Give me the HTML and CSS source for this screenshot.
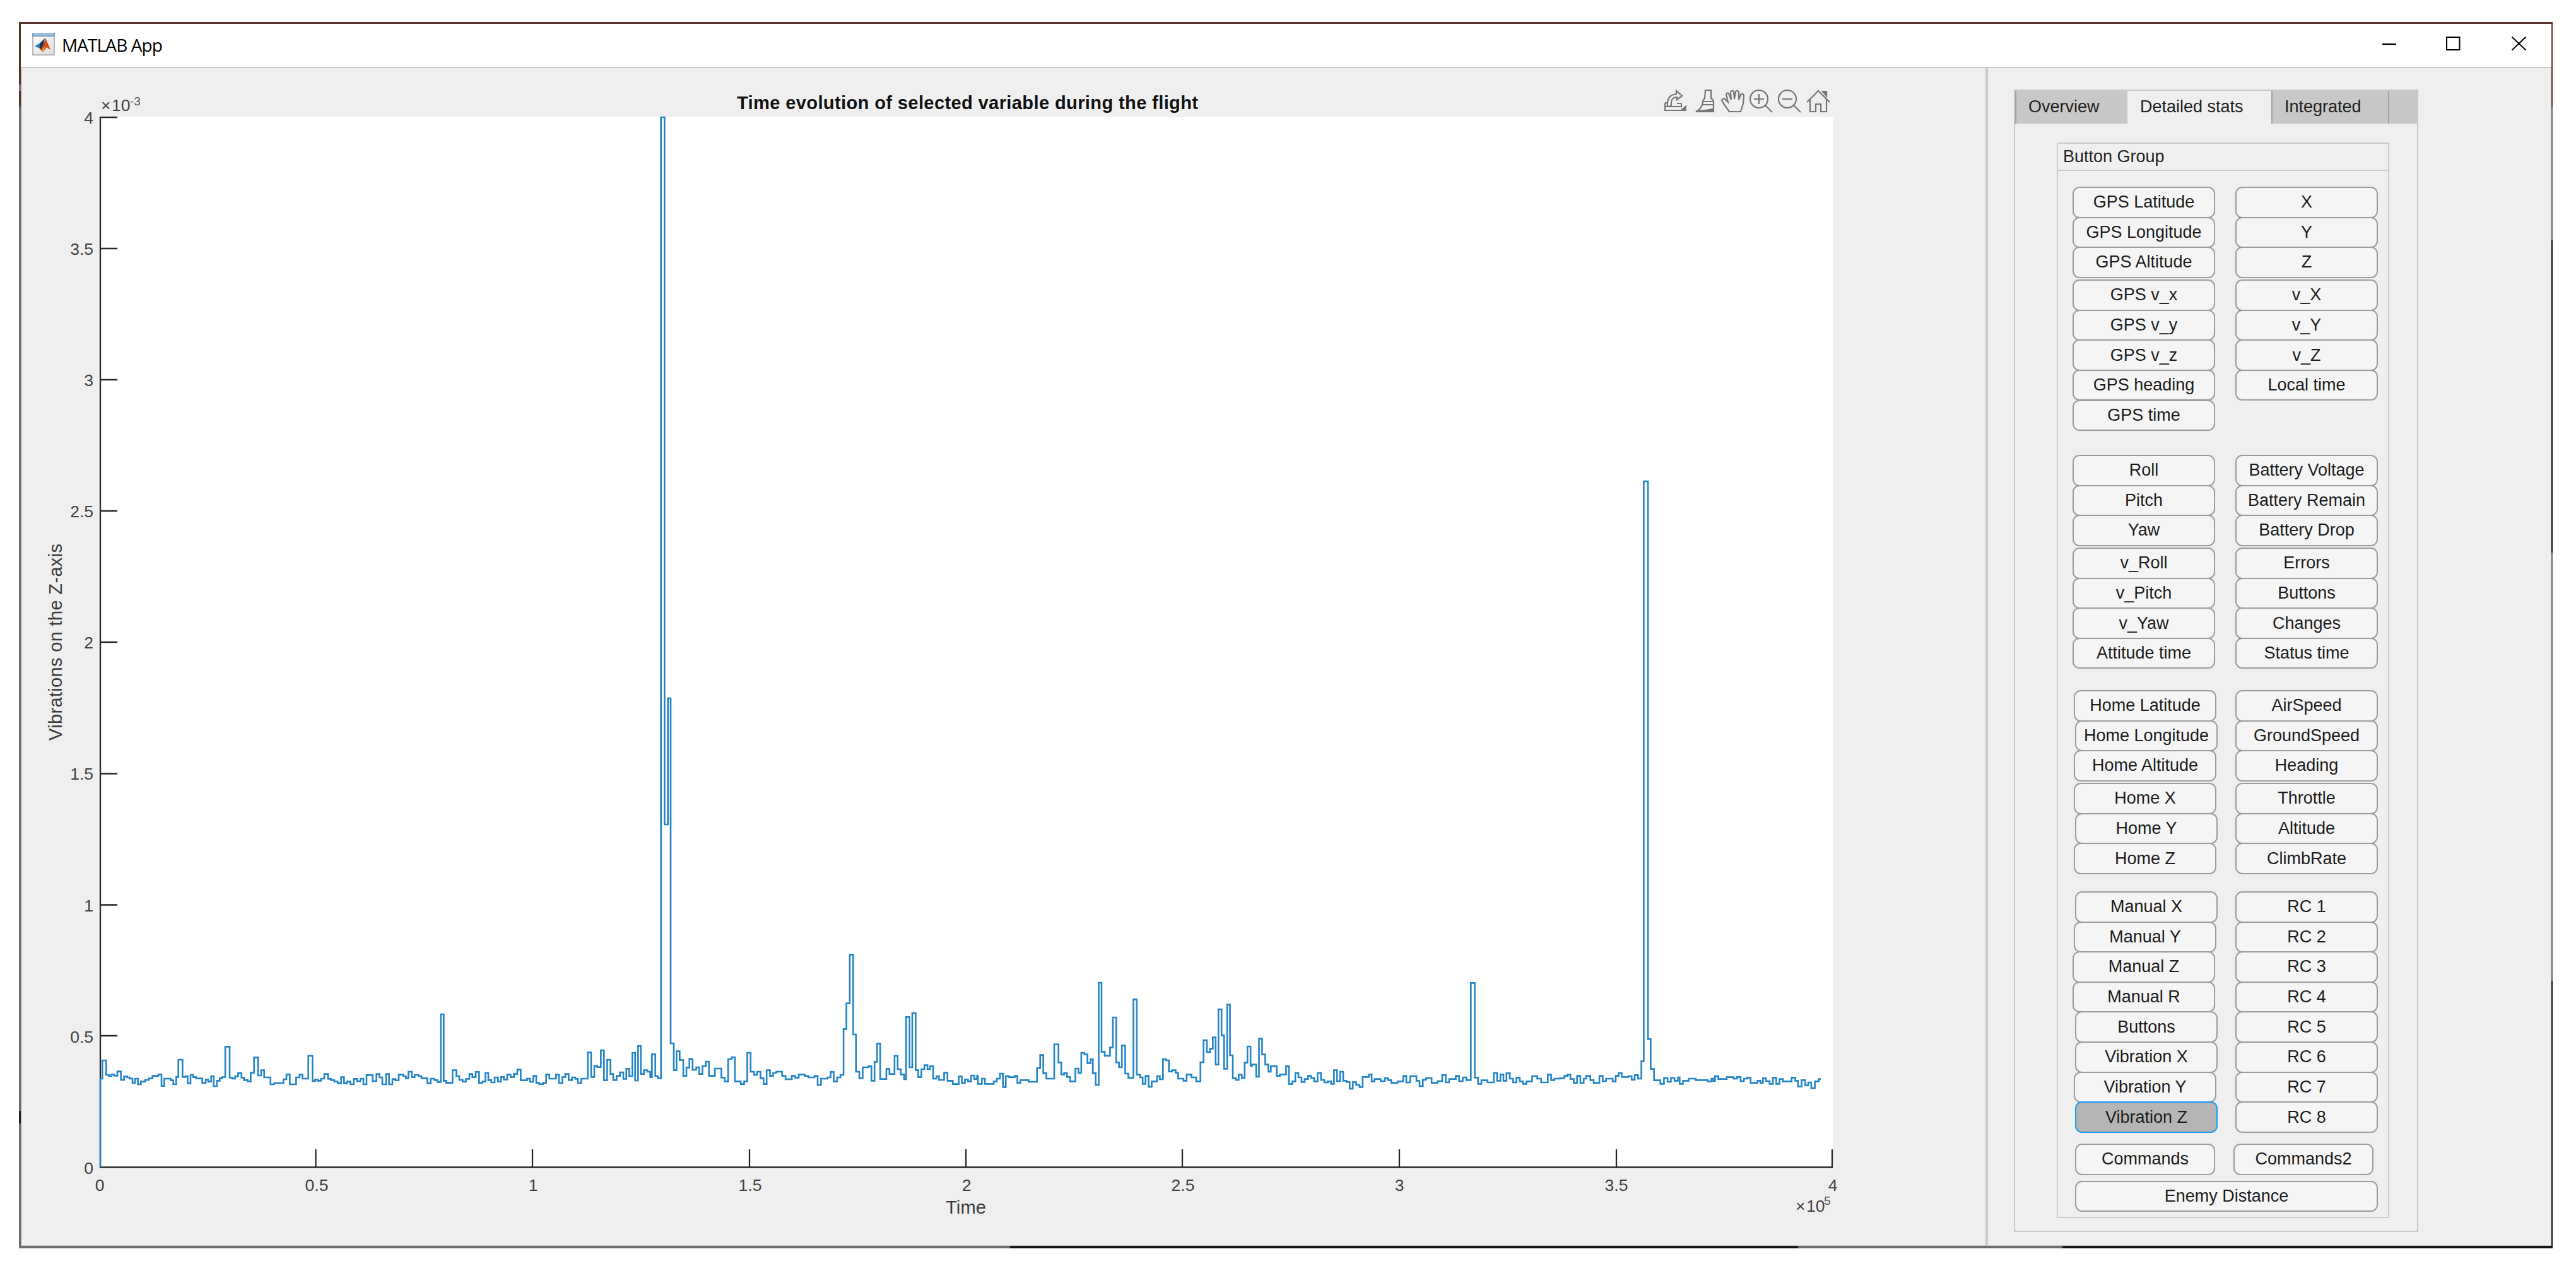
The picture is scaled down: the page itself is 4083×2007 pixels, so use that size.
FILE: index.html
```html
<!DOCTYPE html>
<html lang="en">
<head>
<meta charset="utf-8">
<title>MATLAB App</title>
<link rel="stylesheet" href="styles.css">
</head>
<body>
<div class="window">
  <header class="titlebar">
    <svg class="app-icon" viewBox="0 0 36 36">
      <defs><linearGradient id="sheet" x1="0" y1="0" x2="1" y2="1"><stop offset="0" stop-color="#fff"/><stop offset="1" stop-color="#dcdcdc"/></linearGradient>
      <linearGradient id="flame" x1="0" y1="0" x2="1" y2="0"><stop offset="0" stop-color="#7a1c12"/><stop offset=".5" stop-color="#e0561a"/><stop offset="1" stop-color="#c8321c"/></linearGradient></defs>
      <rect x="1" y="1" width="34" height="34" fill="url(#sheet)" stroke="#b4b8bb" stroke-width="2"/>
      <rect x="0" y="0" width="36" height="6" fill="#7d9fbd"/><rect x="2" y="1" width="32" height="3" fill="#a3c8e6"/>
      <path d="M4 21L12 16.500L19 10L15 26L10 24Z" fill="#3b78b5"/>
      <path d="M12 17L20 9L17 25L12 25Z" fill="#173a66"/>
      <path d="M21 8L29 27L23 23L17 31L12 25Q18 22 21 8Z" fill="url(#flame)"/>
      <path d="M15 27L20 21L19 28L17 31Z" fill="#f4a52a"/>
    </svg>
    <span class="app-name">MATLAB App</span>
    <svg class="controls" viewBox="0 0 228 22" fill="none" stroke="#000" stroke-width="2">
      <path d="M0 12H22" stroke-width="2.300"/><rect x="102" y="1" width="20.500" height="20"/><path d="M205.500 .5L227.500 21.500M227.500 .5L205.500 21.500"/>
    </svg>
  </header>
  <main class="content">
    <section class="plot-panel">
      <svg class="plot" viewBox="35 108 3112 1867">
        <rect x="159" y="185" width="2746" height="1665" fill="#fff"/>
        <g class="axis">
          <path d="M159 185V1850.500H2905"/>
          <path d="M159 186H186M159 394H186M159 602H186M159 810H186M159 1018H186M159 1226.500H186M159 1434.500H186M159 1642H186"/>
          <path d="M500.500 1850V1822M844 1850V1822M1188 1850V1822M1531 1850V1822M1874 1850V1822M2218 1850V1822M2562 1850V1822M2904 1850V1822"/>
        </g>
        <g class="series">
          <path transform="translate(150 1600) scale(.33333)" d="M27 750V330H37V243H55V312H68V318H80V311H94V316H108V296H125V336H140V320H155V324H166V330H180V351H192V330H206V357H220V344H240V336H258V329H275V317H303V310H318V365H331V330H362V338H374V357H388V322H398V240H418V322H432V318H442V352H456V312H468V323H482V329H512V350H528V335H540V344H554V318H566V366H581V340H595V329H605V323H621V178H642V325H655V330H668V319H682V304H698V325H710V337H728V343H742V302H758V229H777V315H792V290H806V324H836V357H854V351H898V333H912V310H928V357H958V324H974V311H988V330H1016V221H1036V342H1048V335H1062V340H1076V330H1092V308H1110V331H1124V337H1140V344H1156V352H1172V323H1186V352H1200V344H1216V357H1232V331H1248V342H1264V330H1278V357H1293V313H1322V342H1340V308H1354V324H1368V357H1386V308H1400V357H1416V332H1430V338H1446V311H1468V318H1480V328H1492V297H1508V323H1522V312H1530"/>
          <path transform="translate(600 1600) scale(.33333)" d="M180 312H190V318H204V328H232V352H248V330H266V337H280V346H296V24H310V340H322V350H352V290H370V318H384V336H400V344H416V331H432V308H446V323H462V298H478V350H494V344H508V303H522V337H536V348H552V324H568V344H582V322H596V334H612V311H628V323H644V308H660V287H676V338H706V330H720V345H736V317H750V350H764V356H782V350H797V310H812V330H844V311H858V351H874V323H888V308H904V337H920V324H936V331H948V351H964V330H995V205H1011V322H1026V269H1040V275H1057V195H1072V338H1087V240H1103V308H1116V337H1132V317H1148V300H1164V331H1178V283H1192V318H1207V207H1220V339H1234V175H1247V308H1262V290H1278V297H1292V323H1300V214H1316V318H1328V328H1343V-4242H1360V-879H1376V-1479H1389V162H1404V290H1417V200H1432V242H1449V317H1464V277H1478V236H1494"/>
          <path transform="translate(850 1500) scale(.44643 .33333)" d="M555 536V588H568V576H578V608H590V570H602V549H613V617H634V582H657V625H669V643H681V537H694V528H705V643H726V656H738V643H749V507H761V597H773V612H784V597H796V628H807V656H818V590H830V617H841V603H852V597H873V617H885V633H907V617H919V625H932V610H953V617H966V624H988V617H999V660H1011V630H1034V624H1045V598H1056V643H1068V624H1080V612H1091V394H1101V272H1113V40H1125V420H1135V597H1147V628H1159V576H1180V571H1190V640H1201V550H1210V463H1221V632H1243V584H1254V608H1272V521H1283V585H1294V610H1306V633H1313V337H1325V576H1335V318H1347V590H1356V623H1367V585H1378V566H1389V585H1398V570H1409V630H1421V618H1430V636H1448V602H1460V640H1479V656H1500V620H1511V650H1522V634H1533V643H1544V615H1555V632H1565V615H1568"/>
          <path transform="translate(1550 1500) scale(.44643 .33333)" d="M0 615V655H14V630H25V655H56V643H67V630H78V606H89V670H99V618H110V623H131V617H140V650H151V637H180V645H210V580H221V518H232V604H243V630H271V467H286V553H296V610H306V603H316V622H327V643H346V582H357V603H367V507H378V514H389V556H400V537H408V604H418V660H429V174H439V502H450V521H469V482H479V339H491V553H501V576H511V472H523V606H534V626H552V253H564V611H576V624H585V655H595V617H606V669H617V643H636V618H646V633H657V537H668V543H678V596H690V590H702V602H711V630H730V640H741V610H758V624H775V643H790V552H801V447H813V504H824V487H834V434H844V563H854V300H865V424H874V583H885V278H895V519H905V628H916V636H926V611H937V627H947V554H957V477H968V569H973V563H988V621H998V440H1009V515H1020V563H1031V597H1040V571H1061V617H1072V610H1094V571H1104V656H1116V643H1127V603H1138V624H1149V646H1160V632H1172V617H1183V627H1194V643H1206V603H1218V636H1230V648H1242V643H1254V655H1264V590H1275V642H1286V597H1297V640H1309V646H1320V678H1331V647H1343V660H1355V670H1366V622H1388V610H1398V643H1408V632H1430V642H1445V628H1456V637H1468V650H1490V643H1510V617H1521V648H1535V618H1557V640H1568"/>
          <path transform="translate(2250 1500) scale(.47831 .33333)" d="M0 640V666H11V635H22V627H40V650H60V642H75V613H87V648H98V632H120V617H131V642H143V624H155V637H170V175H183V625H194V655H205V638H225V648H246V603H257V640H268V610H278V640H288V604H299V630H310V648H321V625H332V643H343V655H354V643H373V618H390V630H403V648H425V611H436V637H447V630H465V628H480V617H490V611H500V632H511V650H522V617H533V650H544V630H552V617H566V637H577V650H596V617H607V642H618V630H640V643H650V617H660V603H670V622H692V618H703V635H713V613H724V630H735V547H743V-2211H757V442H766V584H777V638H798V655H810V627H822V645H833V627H845V640H856V624H862V655H873V640H892V630H915V637H955V643H967V630H973V642H979V618H990V632H1018V623H1040V630H1052V622H1064V642H1075V630H1086V625H1097V650H1120V640H1130V650H1138V628H1148V642H1160V655H1171V625H1182V655H1193V632H1204V643H1233V625H1245V640H1254V667H1266V637H1278V662H1288V648H1298V675H1310V643H1323V632H1330"/>
        </g>
        <g class="labels end">
          <text x="148" y="196">4</text><text x="148" y="404">3.5</text><text x="148" y="612">3</text><text x="148" y="820">2.5</text><text x="148" y="1028">2</text><text x="148" y="1236">1.5</text><text x="148" y="1445">1</text><text x="148" y="1653">0.5</text><text x="148" y="1861">0</text>
        </g>
        <g class="labels mid">
          <text x="158" y="1888">0</text><text x="502" y="1888">0.5</text><text x="845" y="1888">1</text><text x="1189" y="1888">1.5</text><text x="1532" y="1888">2</text><text x="1875" y="1888">2.5</text><text x="2218" y="1888">3</text><text x="2562" y="1888">3.5</text><text x="2905" y="1888">4</text>
        </g>
        <g class="labels">
          <text x="160" y="176">×</text><text x="177" y="176">10</text><text class="sup" x="206" y="167">-3</text>
          <text x="2846" y="1921">×</text><text x="2863" y="1921">10</text><text class="sup" x="2891" y="1910">5</text>
        </g>
        <text class="title" x="1168" y="173" textLength="731">Time evolution of selected variable during the flight</text>
        <text class="axis-label" x="1499" y="1924" textLength="64">Time</text>
        <text class="axis-label" transform="translate(98 1174) rotate(-90)" textLength="312">Vibrations on the Z-axis</text>
        <g class="tools">
          <g transform="translate(2638 143)"><path d="M1 20V32H28V29M1 26H27V21M1 20H6M20 21H27"/><path d="M5 25C4 13 9 7 19 6V1L28 9L20 15V11C13 11 10 16 11 24Q8 27 5 25Z"/><path d="M35 23V33H25Z" fill="#757575" stroke="none"/></g>
          <g transform="translate(2686 142)"><path d="M17 1H26V14Q30 16 30 20V35H2Q11 31 13 20Q13 16 16 14Z"/><path d="M13 19H30M12 24H30"/><path d="M9 32Q20 33 30 29V36H3Z" fill="#757575" stroke="none"/></g>
          <g transform="translate(2728 142)"><path d="M13 35L3 21L1 17Q3 13 6 15L11 20L8 8Q9 4 12 6L16 16L15 4Q17 0 20 3L21 15L23 3Q26 0 28 4V16L31 8Q35 5 36 9L35 22L31 35Z"/></g>
          <g transform="translate(2773 142)"><circle cx="15" cy="15" r="14"/><path d="M7 15H23M15 7V23M25 25L36 36"/></g>
          <g transform="translate(2818 142)"><circle cx="15" cy="15" r="14"/><path d="M7 15H23M25 25L36 36"/></g>
          <g transform="translate(2864 142)"><path d="M0 20L18 2L36 20M5 16V35H14V23H22V35H31V16"/><path d="M25 4H31V12"/><path d="M25 3H31V10Z" fill="#757575"/></g>
        </g>
      </svg>
    </section>
    <aside class="side-panel">
      <div class="tab-group">
        <nav class="tabs">
          <div class="tab first">Overview</div><div class="tab active">Detailed stats</div><div class="tab last">Integrated</div>
        </nav>
        <div class="button-group">
          <h2>Button Group</h2>
          <div class="block gps">
            <div class="col"><button>GPS Latitude</button><button>GPS Longitude</button><button>GPS Altitude</button><button class="apart">GPS v_x</button><button>GPS v_y</button><button>GPS v_z</button><button>GPS heading</button><button>GPS time</button></div>
            <div class="col"><button>X</button><button>Y</button><button>Z</button><button class="apart">v_X</button><button>v_Y</button><button>v_Z</button><button>Local time</button></div>
          </div>
          <div class="block attitude">
            <div class="col"><button>Roll</button><button>Pitch</button><button>Yaw</button><button class="apart">v_Roll</button><button>v_Pitch</button><button>v_Yaw</button><button>Attitude time</button></div>
            <div class="col"><button>Battery Voltage</button><button>Battery Remain</button><button>Battery Drop</button><button class="apart">Errors</button><button>Buttons</button><button>Changes</button><button>Status time</button></div>
          </div>
          <div class="block home">
            <div class="col"><button class="in1">Home Latitude</button><button class="in2">Home Longitude</button><button class="in1">Home Altitude</button><button class="in1 apart">Home X</button><button class="in2">Home Y</button><button class="in1">Home Z</button></div>
            <div class="col"><button>AirSpeed</button><button>GroundSpeed</button><button>Heading</button><button class="apart">Throttle</button><button>Altitude</button><button>ClimbRate</button></div>
          </div>
          <div class="block manual">
            <div class="col"><button class="in2">Manual X</button><button class="in1">Manual Y</button><button>Manual Z</button><button>Manual R</button><button class="in2">Buttons</button><button class="in2">Vibration X</button><button class="in1">Vibration Y</button><button class="in2 selected">Vibration Z</button></div>
            <div class="col"><button>RC 1</button><button>RC 2</button><button>RC 3</button><button>RC 4</button><button>RC 5</button><button>RC 6</button><button>RC 7</button><button>RC 8</button></div>
          </div>
          <div class="commands"><button>Commands</button><button>Commands2</button></div>
          <button class="wide">Enemy Distance</button>
        </div>
      </div>
    </aside>
  </main>
</div>
</body>
</html>
```
FILE: styles.css
```css
* { box-sizing: border-box; }
body { margin: 0; background: #fff; font-family: "Liberation Sans", Arial, sans-serif; overflow: hidden; }

.window {
  display: flex;
  flex-direction: column;
  width: 4016px;
  height: 1944px;
  margin: 35px 0 0 30px;
  padding: 3px 2px 4px 3px;
  background:
    linear-gradient(#5a322c, #5a322c) 0 0 / 100% 3px no-repeat,
    linear-gradient(90deg, #6d6d6d 1571px, #151717 1571px 2820px, #6d6d6d 2820px 3239px, #151717 3239px) 0 100% / 100% 4px no-repeat,
    linear-gradient(#5a322c 99px, #777 99px 109px, #5a322c 109px 134px, #6d6d6d 134px 1726px, #222 1726px 1746px, #6d6d6d 1746px) 0 0 / 3px 100% no-repeat,
    linear-gradient(#6a332e 135px, #6d6d6d 135px 346px, #111 346px 841px, #6d6d6d 841px 1520px, #151717 1520px) 100% 0 / 2px 100% no-repeat;
}

.titlebar { display: flex; align-items: flex-start; flex: none; height: 68px; background: #fff; padding: 14px 40px 0 18px; }
.app-icon { width: 36px; height: 36px; }
.app-name { margin: 1px auto 0 11px; font: 28px/36px "Open Sans", "Noto Sans", sans-serif; letter-spacing: -0.9px; color: #000; }
.controls { width: 228px; height: 22px; margin-top: 6px; }

.content { display: flex; flex: 1; min-height: 0; background: #efefef; border: 2px solid #c9c9c9; border-right-width: 1px; border-bottom-width: 1px; }
.plot-panel { width: 3112px; flex: none; }
.plot { display: block; width: 3112px; height: 1867px; }
.side-panel { flex: 1; padding: 34px 0 0 41px; border-left: 4px solid #cbcbcb; }

.axis { fill: none; stroke: #262626; stroke-width: 2.3; }
.series path { fill: none; stroke: #2384c6; stroke-width: 2.6; vector-effect: non-scaling-stroke; }
.labels { font-size: 26.5px; fill: #404040; }
.end { text-anchor: end; }
.mid { text-anchor: middle; }
.sup { font-size: 19px; fill: #555; }
.title { font-size: 29px; font-weight: bold; fill: #111; }
.axis-label { font-size: 29px; fill: #3a3a3a; }
.tools { fill: none; stroke: #757575; stroke-width: 2.2; }

.tab-group { width: 641px; height: 1811px; border: 2px solid #c8c8c8; }
.tabs { display: flex; height: 52px; background: #c8c8c8; font-size: 27px; line-height: 51px; color: #222; }
.tab { padding-left: 19px; }
.first { width: 178px; border-left: 2px solid #a3a3a3; }
.active { width: 228px; padding-left: 20px; background: #efefef; }
.last { width: 187px; border: solid #a3a3a3; border-width: 0 2px; }

.button-group { width: 527px; height: 1705px; margin: 30px 0 0 66px; border: 2px solid #cbcbcb; }
h2 { height: 43px; margin: 0; padding-left: 8px; border-bottom: 2px solid #cbcbcb; font: 27px/41px "Liberation Sans", Arial, sans-serif; color: #222; }
.block { display: flex; gap: 32px; padding-left: 23px; }
.gps { height: 425px; padding-top: 25px; }
.attitude { height: 373px; padding-top: 25px; }
.home { height: 319px; padding-top: 25px; }
.manual { height: 425px; padding-top: 25px; }
.col { display: flex; flex-direction: column; width: 226px; }

button {
  flex: none;
  width: 226px;
  height: 49.500px;
  margin: 0 0 -1.9px;
  padding: 0;
  border: 2px solid #9c9c9c;
  border-radius: 11px;
  background: #f5f5f5;
  font: 27px/1 "Liberation Sans", Arial, sans-serif;
  color: #1c1c1c;
  white-space: nowrap;
}
.apart { margin-top: 4.300px; }
.in1 { margin-left: 2px; }
.in2 { margin-left: 4px; }
.selected { background: #b5b5b5; border-color: #1a9cf5; }
.commands { display: flex; gap: 29px; padding-left: 27px; }
.commands button { width: 222px; margin: 0; }
.wide { display: block; width: 480px; margin: 9px 0 0 27px; }
```
